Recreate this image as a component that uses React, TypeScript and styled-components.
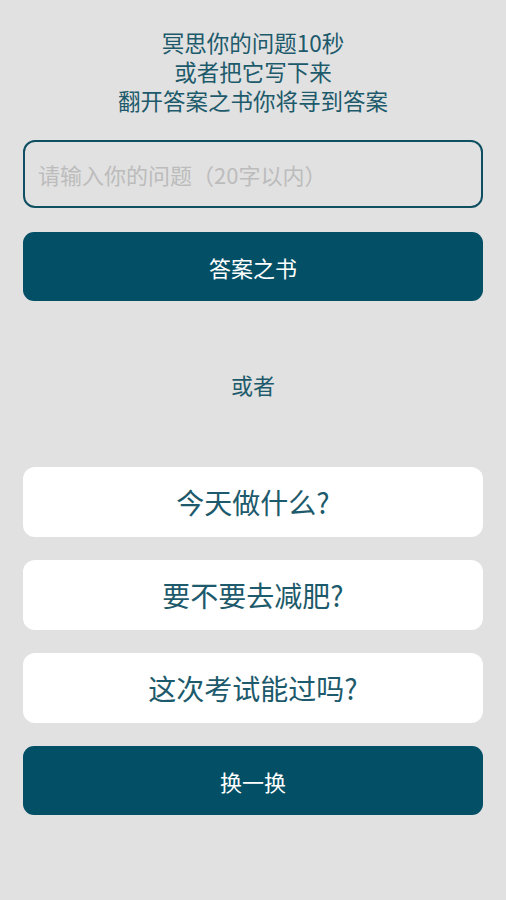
import { useState } from 'react';
import styled, { createGlobalStyle } from 'styled-components';

const TEAL = '#024f66';
const TEXT = '#1d5a6b';

const GlobalStyle = createGlobalStyle`
  html, body {
    margin: 0;
    padding: 0;
    background: #e1e1e1;
  }
  body {
    font-family: "Noto Sans CJK SC", "Noto Sans", sans-serif;
  }
`;

const Page = styled.div`
  box-sizing: border-box;
  min-height: 900px;
  padding: 28px 23px 0;
  display: flex;
  flex-direction: column;
`;

const Intro = styled.div`
  text-align: center;
  color: ${TEXT};
  font-size: 22.5px;
  line-height: 29px;
`;

const QuestionInput = styled.input`
  box-sizing: border-box;
  margin-top: 25px;
  width: 100%;
  height: 68px;
  padding: 0 13px;
  border: 2px solid #0e4f62;
  border-radius: 12px;
  background: transparent;
  font-family: inherit;
  font-size: 22px;
  color: ${TEXT};
  outline: none;
  &::placeholder {
    color: #bcbcbc;
  }
`;

const ActionButton = styled.button<{ $top?: number }>`
  box-sizing: border-box;
  width: 100%;
  height: 69px;
  margin-top: ${(p) => p.$top ?? 0}px;
  border: none;
  border-radius: 11px;
  background: ${TEAL};
  color: #fff;
  font-family: inherit;
  font-size: 22px;
  cursor: pointer;
`;

const Divider = styled.div`
  height: 166px;
  display: flex;
  align-items: center;
  justify-content: center;
  color: ${TEXT};
  font-size: 22px;
`;

const Suggestions = styled.div`
  display: flex;
  flex-direction: column;
  gap: 23px;
`;

const SuggestionCard = styled.button`
  box-sizing: border-box;
  width: 100%;
  height: 70px;
  border: none;
  border-radius: 12px;
  background: #fff;
  color: ${TEXT};
  font-family: inherit;
  font-size: 28px;
  cursor: pointer;
`;

const pool = [
  ['今天做什么?', '要不要去减肥?', '这次考试能过吗?'],
  ['明天会下雨吗?', '要不要换工作?', '他喜欢我吗?'],
];

export default function App() {
  const [question, setQuestion] = useState('');
  const [page, setPage] = useState(0);

  return (
    <>
      <GlobalStyle />
      <Page>
        <Intro>
          冥思你的问题10秒
          <br />
          或者把它写下来
          <br />
          翻开答案之书你将寻到答案
        </Intro>
        <QuestionInput
          value={question}
          maxLength={20}
          placeholder="请输入你的问题（20字以内）"
          onChange={(e) => setQuestion(e.target.value)}
        />
        <ActionButton $top={24}>答案之书</ActionButton>
        <Divider>或者</Divider>
        <Suggestions>
          {pool[page].map((q) => (
            <SuggestionCard key={q} onClick={() => setQuestion(q)}>
              {q}
            </SuggestionCard>
          ))}
        </Suggestions>
        <ActionButton $top={23} onClick={() => setPage((page + 1) % pool.length)}>
          换一换
        </ActionButton>
      </Page>
    </>
  );
}
